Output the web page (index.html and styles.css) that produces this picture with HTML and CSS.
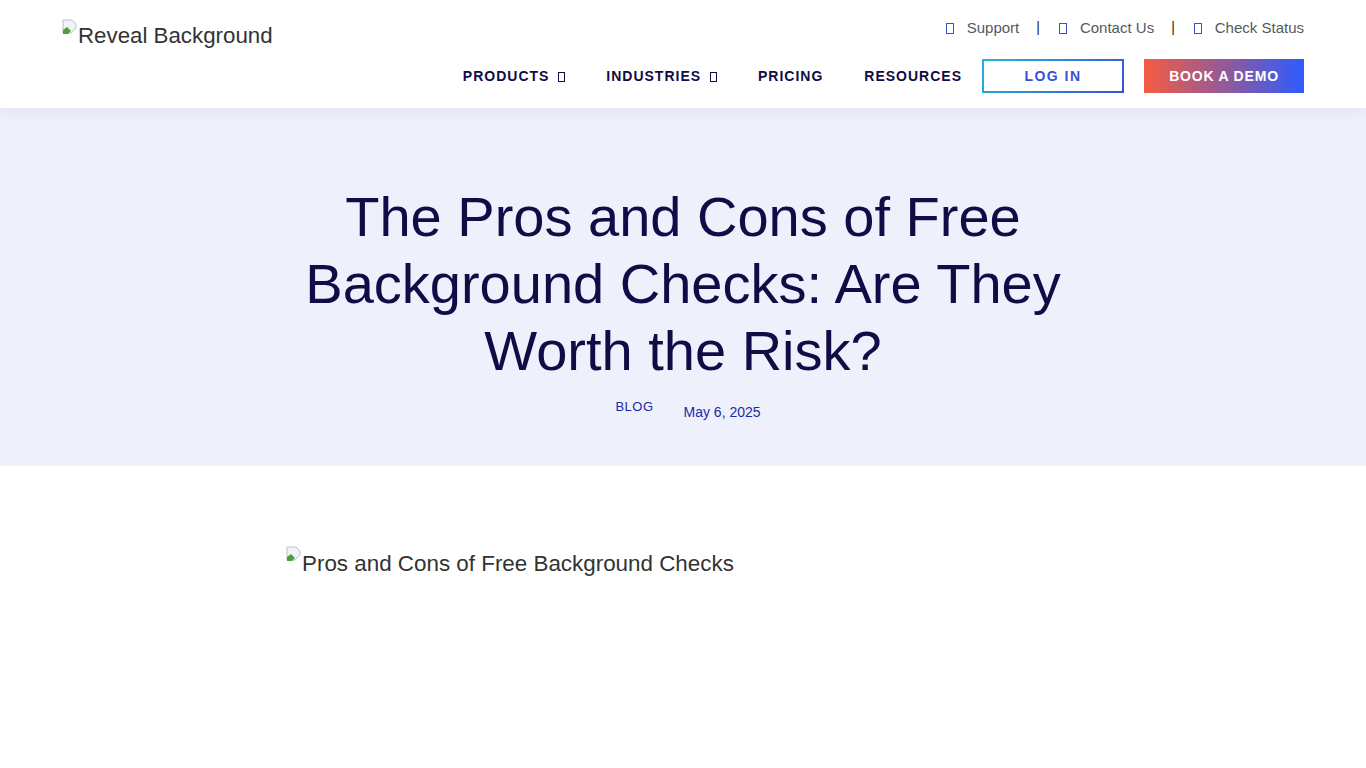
FILE: index.html
```html
<!DOCTYPE html>
<html lang="en">
<head>
  <meta charset="UTF-8">
  <meta name="viewport" content="width=device-width, initial-scale=1.0">
  <title>The Pros and Cons of Free Background Checks</title>
  <link rel="stylesheet" href="styles.css">
</head>
<body>
  <header class="site-header">
    <div class="logo">
      <svg class="broken" width="16" height="16" viewBox="0 0 16 16"><path d="M1 1h9l4 4v4L9 14H1z" fill="#f1f3f8" stroke="#b8c0d0"/><path d="M1 15V11l4-3 4 4-3 3z" fill="#4f9e3c"/></svg><span>Reveal Background</span>
    </div>
    <div class="header-right">
      <div class="top-links">
        <a href="#"><span class="tofu"></span>Support</a>
        <span class="sep">|</span>
        <a href="#"><span class="tofu"></span>Contact Us</a>
        <span class="sep">|</span>
        <a href="#"><span class="tofu"></span>Check Status</a>
      </div>
      <nav class="main-nav">
        <a href="#">PRODUCTS <span class="tofu dark"></span></a>
        <a href="#">INDUSTRIES <span class="tofu dark"></span></a>
        <a href="#">PRICING</a>
        <a href="#">RESOURCES</a>
        <a href="#" class="btn-login">LOG IN</a>
        <a href="#" class="btn-demo">BOOK A DEMO</a>
      </nav>
    </div>
  </header>

  <section class="hero">
    <h1>The Pros and Cons of Free Background Checks: Are They Worth the Risk?</h1>
    <div class="meta">
      <a href="#" class="cat">BLOG</a>
      <span class="date">May 6, 2025</span>
    </div>
  </section>

  <main class="post">
    <div class="feature">
      <svg class="broken" width="16" height="16" viewBox="0 0 16 16"><path d="M1 1h9l4 4v4L9 14H1z" fill="#f1f3f8" stroke="#b8c0d0"/><path d="M1 15V11l4-3 4 4-3 3z" fill="#4f9e3c"/></svg><span>Pros and Cons of Free Background Checks</span>
    </div>
  </main>
</body>
</html>
```

FILE: styles.css
```css
* {
  box-sizing: border-box;
}

body {
  margin: 0;
  font-family: "Liberation Sans", Arial, sans-serif;
  background: #fff;
  color: #333;
}

a {
  text-decoration: none;
  color: inherit;
}

.site-header {
  height: 108px;
  display: flex;
  justify-content: space-between;
  padding: 0 62px;
  background: #fff;
  box-shadow: 0 2px 14px rgba(40, 50, 120, 0.08);
  position: relative;
  z-index: 2;
}

.logo {
  padding-top: 19px;
  font-size: 22.3px;
  color: #333;
  display: flex;
  align-items: flex-start;
}

.logo span {
  margin-top: 4px;
}

.header-right {
  display: flex;
  flex-direction: column;
  align-items: flex-end;
}

.top-links {
  display: flex;
  align-items: center;
  height: 54px;
  font-size: 15px;
  color: #54595f;
}

.top-links .sep {
  margin: 0 19px 0 17px;
  color: #222;
  font-size: 14px;
}

.tofu {
  display: inline-block;
  width: 8px;
  height: 11px;
  border: 1px solid #3c4fd0;
  margin-right: 13px;
  vertical-align: -1px;
}

.tofu.dark {
  border-color: #0f0c46;
  width: 7px;
  height: 10px;
  margin: 0 0 0 4px;
}

.main-nav {
  display: flex;
  align-items: center;
  margin-top: 5px;
  font-size: 14px;
  font-weight: 700;
  letter-spacing: 1px;
  color: #0f0c46;
}

.main-nav > a {
  margin-left: 41px;
}

.main-nav > a:first-child {
  margin-left: 0;
}

.btn-login {
  width: 142px;
  height: 34px;
  display: flex;
  align-items: center;
  justify-content: center;
  border: 2px solid transparent;
  background: linear-gradient(#fff, #fff) padding-box,
    linear-gradient(135deg, #22b8d8, #3b4fd6) border-box;
  color: #3a4fd4;
  letter-spacing: 1.5px;
  margin-left: 20px !important;
}

.btn-demo {
  width: 160px;
  height: 34px;
  display: flex;
  align-items: center;
  justify-content: center;
  background: linear-gradient(90deg, #f55c42 0%, #8a5aa0 55%, #2c5cff 100%);
  color: #fff;
  letter-spacing: 0.8px;
  margin-left: 20px !important;
}

.hero {
  background: #eef0fc;
  height: 358px;
  padding-top: 75px;
  text-align: center;
}

.hero h1 {
  margin: 0 auto;
  max-width: 790px;
  font-size: 56px;
  font-weight: 400;
  line-height: 67px;
  color: #0f0c46;
}

.meta {
  display: flex;
  justify-content: center;
  align-items: flex-start;
  margin-top: 15px;
  color: #1b2aa8;
  padding-left: 10px;
}

.meta .cat {
  font-size: 13px;
  letter-spacing: 0.5px;
}

.meta .date {
  font-size: 14px;
  margin-left: 30px;
  margin-top: 5px;
}

.post {
  padding: 80px 286px;
}

.feature {
  display: flex;
  align-items: flex-start;
  font-size: 22.4px;
  color: #333;
}

.feature span {
  margin-top: 5px;
}
```
